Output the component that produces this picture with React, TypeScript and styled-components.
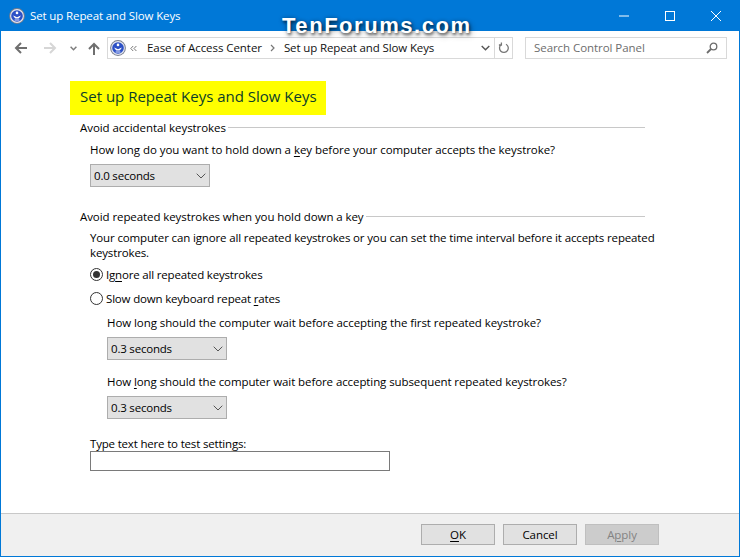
import React from "react";
import styled, { createGlobalStyle } from "styled-components";

const Global = createGlobalStyle`
  html, body { margin: 0; padding: 0; background: #fff; }
  #root { width: 740px; height: 557px; }
  * { box-sizing: border-box; }
`;

const Win = styled.div`
  position: relative;
  width: 740px;
  height: 557px;
  display: flex;
  flex-direction: column;
  background: #fff;
  border: 1px solid #0078d7;
  border-top: 0;
  font-family: "Open Sans", "Noto Sans", sans-serif;
  font-size: 11.5px;
  letter-spacing: -0.06px;
  color: #000;
  overflow: hidden;
`;

const TitleBar = styled.div`
  height: 31px;
  flex: none;
  background: #0078d7;
  display: flex;
  align-items: center;
  padding: 0 0 0 8px;
  color: #fff;
  letter-spacing: -0.12px;
`;
const TitleText = styled.span`
  margin-left: 5px;
  flex: 1;
`;
const WinBtn = styled.div`
  width: 46px;
  height: 31px;
  display: flex;
  align-items: center;
  justify-content: center;
`;

const Watermark = styled.div`
  position: absolute;
  left: 281px;
  top: 12px;
  font-family: "Liberation Sans", sans-serif;
  font-weight: 700;
  font-size: 22px;
  letter-spacing: 1.55px;
  line-height: 28px;
  color: #fff;
  text-shadow: 1px 2px 3px rgba(0,0,0,.55), 2px 3px 6px rgba(0,0,0,.3), 0 0 4px rgba(0,0,0,.25);
`;

const NavBar = styled.div`
  height: 40px;
  flex: none;
  display: flex;
  align-items: flex-start;
  padding-top: 6px;
`;
const NavIcons = styled.div`
  width: 106px;
  height: 22px;
  flex: none;
  display: flex;
  align-items: center;
  padding-left: 12px;
`;
const NavBtn = styled.div<{ $w: number; $ml?: number }>`
  width: ${p => p.$w}px;
  margin-left: ${p => p.$ml ?? 0}px;
  display: flex;
  align-items: center;
  justify-content: center;
`;
const Address = styled.div`
  width: 406px;
  height: 22px;
  flex: none;
  border: 1px solid #d9d9d9;
  display: flex;
  align-items: center;
  padding-left: 2px;
  color: #111;
`;
const Crumb = styled.span<{ $ls?: number }>`
  white-space: nowrap;
  letter-spacing: ${p => p.$ls ?? -0.06}px;
  margin-top: -1px;
`;
const Spacer = styled.div`
  flex: 1;
`;
const RefreshCell = styled.div`
  width: 18px;
  height: 20px;
  margin-left: 4px;
  border-left: 1px solid #d9d9d9;
  display: flex;
  align-items: center;
  justify-content: center;
`;
const Search = styled.div`
  width: 202px;
  height: 22px;
  flex: none;
  margin-left: 12px;
  border: 1px solid #d9d9d9;
  display: flex;
  align-items: center;
  justify-content: space-between;
  padding: 0 8px 1px;
  color: #6d6d6d;
`;

const Main = styled.div`
  flex: 1;
  display: flex;
  flex-direction: column;
  align-items: flex-start;
  padding: 10px 0 0 69px;
`;
const Heading = styled.h1`
  margin: 0;
  width: 256px;
  height: 34px;
  background: #ffff00;
  color: #0a3d2a;
  font-weight: 400;
  font-size: 15px;
  letter-spacing: 0;
  line-height: 31px;
  padding-left: 10px;
  white-space: nowrap;
`;
const GroupHead = styled.div<{ $mt: number; $ls?: number }>`
  width: 565px;
  margin: ${p => p.$mt}px 0 0 10px;
  display: flex;
  align-items: center;
  height: 16px;
  white-space: nowrap;
  letter-spacing: ${p => p.$ls ?? -0.06}px;
  &::after {
    content: "";
    flex: 1;
    height: 1px;
    margin-left: 2px;
    background: #c8c8c8;
  }
`;
const Label = styled.div<{ $mt: number; $ml: number; $ls?: number }>`
  margin: ${p => p.$mt}px 0 0 ${p => p.$ml}px;
  height: 16px;
  line-height: 16px;
  white-space: nowrap;
  letter-spacing: ${p => p.$ls ?? -0.06}px;
`;
const Para = styled.div`
  margin: 6px 0 0 20px;
  width: 580px;
  line-height: 15px;
  letter-spacing: -0.14px;
`;
const Key = styled.span`
  text-decoration: underline;
  text-underline-offset: 2px;
`;
const Select = styled.div<{ $mt: number; $ml: number }>`
  width: 120px;
  height: 23px;
  margin: ${p => p.$mt}px 0 0 ${p => p.$ml}px;
  background: #e1e1e1;
  border: 1px solid #adadad;
  display: flex;
  align-items: center;
  justify-content: space-between;
  padding: 0 3px 0 3px;
  letter-spacing: -0.2px;
`;
const RadioRow = styled.div<{ $mt: number }>`
  margin: ${p => p.$mt}px 0 0 20px;
  height: 16px;
  display: flex;
  align-items: center;
  gap: 3px;
  white-space: nowrap;
  letter-spacing: -0.18px;
`;
const Radio = styled.span<{ $on?: boolean }>`
  width: 13px;
  height: 13px;
  border-radius: 50%;
  border: 1px solid #333;
  background: #fff;
  display: flex;
  align-items: center;
  justify-content: center;
  &::after {
    content: "";
    width: 7px;
    height: 7px;
    border-radius: 50%;
    background: ${p => (p.$on ? "#333" : "transparent")};
  }
`;
const TextInput = styled.div`
  width: 300px;
  height: 20px;
  margin: -1px 0 0 20px;
  border: 1px solid #7a7a7a;
  background: #fff;
`;

const Footer = styled.div`
  height: 43px;
  flex: none;
  background: #f0f0f0;
  border-top: 1px solid #c8c8c8;
  display: flex;
  justify-content: flex-end;
  align-items: flex-start;
  gap: 8px;
  padding: 10px 80px 0 0;
`;
const Btn = styled.div<{ $off?: boolean }>`
  width: 74px;
  height: 21px;
  background: ${p => (p.$off ? "#cccccc" : "#e1e1e1")};
  border: 1px solid ${p => (p.$off ? "#bfbfbf" : "#adadad")};
  color: ${p => (p.$off ? "#838383" : "#000")};
  display: flex;
  align-items: center;
  justify-content: center;
  white-space: pre;
`;

const Chevron = () => (
  <svg width="10" height="6" viewBox="0 0 10 6" fill="none" stroke="#555" strokeWidth="1">
    <path d="M.7 .7L5 5l4.3-4.3" />
  </svg>
);

const EaseIcon = ({ size }: { size: number }) => (
  <svg width={size} height={size} viewBox="0 0 16 16">
    <circle cx="8" cy="8" r="7.9" fill="#777d8e" />
    <circle cx="8" cy="8" r="6.9" fill="#e4e7f0" />
    <circle cx="8" cy="8" r="5.8" fill="#2c50c6" />
    <circle cx="8" cy="4.9" r="1.3" fill="#fff" />
    <path d="M4.2 7.4c.9 1.7 1.7 2.7 2.4 3.1h2.8c.7-.4 1.5-1.4 2.4-3.1L8 9.2z" fill="#fff" />
    <path d="M5.6 12h4.8" fill="none" stroke="#dfe6ff" strokeWidth="1" />
  </svg>
);

export default function App() {
  return (
    <>
      <Global />
      <Win>
        <TitleBar>
          <EaseIcon size={16} />
          <TitleText>Set up Repeat and Slow Keys</TitleText>
          <WinBtn>
            <svg width="10" height="10" viewBox="0 0 10 10"><path d="M0 5h10" stroke="#fff" /></svg>
          </WinBtn>
          <WinBtn>
            <svg width="10" height="10" viewBox="0 0 10 10"><rect x=".5" y=".5" width="9" height="9" fill="none" stroke="#fff" /></svg>
          </WinBtn>
          <WinBtn>
            <svg width="10" height="10" viewBox="0 0 10 10"><path d="M0 0l10 10M10 0L0 10" stroke="#fff" /></svg>
          </WinBtn>
        </TitleBar>
        <Watermark>TenForums.com</Watermark>
        <NavBar>
          <NavIcons>
            <NavBtn $w={14}>
              <svg width="13" height="12" viewBox="0 0 13 12" fill="none" stroke="#6f6f6f" strokeWidth="2"><path d="M13 6H2M7 1L2 6l5 5" /></svg>
            </NavBtn>
            <NavBtn $w={14} $ml={16}>
              <svg width="13" height="12" viewBox="0 0 13 12" fill="none" stroke="#d6d6d6" strokeWidth="2"><path d="M0 6h11M6 1l5 5-5 5" /></svg>
            </NavBtn>
            <NavBtn $w={8} $ml={12}>
              <svg width="7" height="5" viewBox="0 0 7 5" fill="none" stroke="#7d7d7d" strokeWidth="1.5"><path d="M.6 .8l2.9 2.9L6.4 .8" /></svg>
            </NavBtn>
            <NavBtn $w={14} $ml={10}>
              <svg width="12" height="13" viewBox="0 0 12 13" fill="none" stroke="#6f6f6f" strokeWidth="2"><path d="M6 13V2M1 7l5-5 5 5" /></svg>
            </NavBtn>
          </NavIcons>
          <Address>
            <EaseIcon size={16} />
            <svg style={{ margin: "0 10px 0 4px" }} width="7" height="7" viewBox="0 0 7 7" fill="none" stroke="#777" strokeWidth="1"><path d="M3.2 1L.8 3.5 3.2 6M6.4 1L4 3.5 6.4 6" /></svg>
            <Crumb>Ease of Access Center</Crumb>
            <svg style={{ margin: "0 9px 0 8px" }} width="5" height="8" viewBox="0 0 5 8" fill="none" stroke="#777" strokeWidth="1.2"><path d="M1 1l3 3-3 3" /></svg>
            <Crumb $ls={-0.13}>Set up Repeat and Slow Keys</Crumb>
            <Spacer />
            <svg width="9" height="6" viewBox="0 0 9 6" fill="none" stroke="#555" strokeWidth="1.4"><path d="M.7 1l3.8 3.8L8.3 1" /></svg>
            <RefreshCell>
              <svg width="12" height="12" viewBox="0 0 12 12" fill="none" stroke="#777" strokeWidth="1.3"><path d="M3.2 2.6A4.4 4.4 0 1 0 8 2.2M3.4.6v2.4H.9" /></svg>
            </RefreshCell>
          </Address>
          <Search>
            <span>Search Control Panel</span>
            <svg width="12" height="12" viewBox="0 0 12 12" fill="none" stroke="#6d6d6d"><circle cx="7.5" cy="4.5" r="3.3" strokeWidth="1.3" /><path d="M5 7L1 11" strokeWidth="1.8" /></svg>
          </Search>
        </NavBar>
        <Main>
          <Heading>Set up Repeat Keys and Slow Keys</Heading>
          <GroupHead $mt={4}>Avoid accidental keystrokes</GroupHead>
          <Label $mt={7} $ml={20} $ls={-0.05}>How long do you want to hold down a <Key>k</Key>ey before your computer accepts the keystroke?</Label>
          <Select $mt={6} $ml={20}>0.0 seconds<Chevron /></Select>
          <GroupHead $mt={21} $ls={-0.08}>Avoid repeated keystrokes when you hold down a key</GroupHead>
          <Para>Your computer can ignore all repeated keystrokes or you can set the time interval before it accepts repeated keystrokes.</Para>
          <RadioRow $mt={6}><Radio $on /><span>Ig<Key>n</Key>ore all repeated keystrokes</span></RadioRow>
          <RadioRow $mt={8}><Radio /><span>Slow down keyboard repeat <Key>r</Key>ates</span></RadioRow>
          <Label $mt={9} $ml={37} $ls={-0.075}>How long should the computer wait before accepting the first repeated keystroke?</Label>
          <Select $mt={6} $ml={37}>0.3 seconds<Chevron /></Select>
          <Label $mt={14} $ml={37} $ls={-0.09}>How <Key>l</Key>ong should the computer wait before accepting subsequent repeated keystrokes?</Label>
          <Select $mt={6} $ml={37}>0.3 seconds<Chevron /></Select>
          <Label $mt={17} $ml={20} $ls={-0.18}>Type text here to test settin<Key>g</Key>s:</Label>
          <TextInput />
        </Main>
        <Footer>
          <Btn><span><Key>O</Key>K</span></Btn>
          <Btn>Cancel</Btn>
          <Btn $off><span>A<Key>p</Key>ply</span></Btn>
        </Footer>
      </Win>
    </>
  );
}
